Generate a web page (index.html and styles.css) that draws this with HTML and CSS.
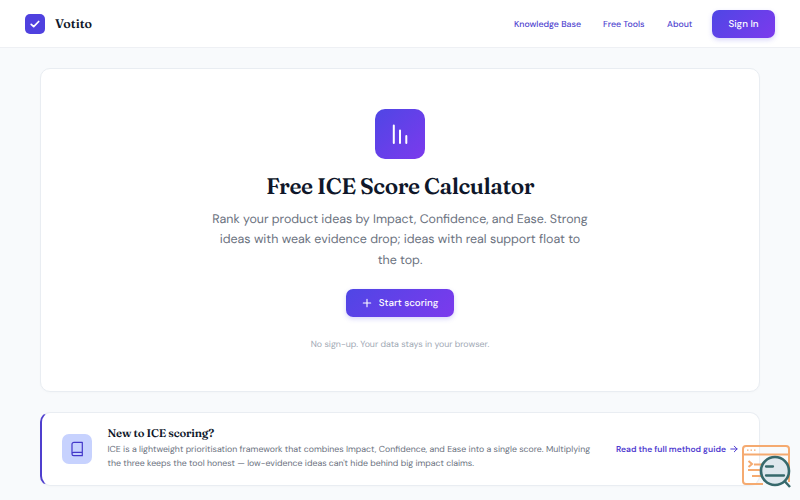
FILE: index.html
```html
<!DOCTYPE html>
<html lang="en">
<head>
<meta charset="utf-8">
<title>Free ICE Score Calculator</title>
<link rel="stylesheet" href="styles.css">
</head>
<body>
<header class="header">
  <a class="brand">
    <svg class="logo" viewBox="0 0 20 20"><rect width="20" height="20" rx="5" fill="#4f41df"/><path d="M6.200 10.300l2.500 2.400 5-5.200" fill="none" stroke="#fff" stroke-width="1.700" stroke-linecap="round" stroke-linejoin="round"/></svg>
    <span class="brand-name">Votito</span>
  </a>
  <nav class="nav">
    <a class="nav-kb">Knowledge Base</a><a class="nav-tools">Free Tools</a><a class="nav-about">About</a>
    <a class="button signin"><span>Sign In</span></a>
  </nav>
</header>
<main class="main">
  <section class="hero">
    <div class="hero-icon"><svg width="50" height="50" viewBox="0 0 50 50"><path d="M18.800 16.500v17.500M25 21.500v12.500M31.300 27v7" fill="none" stroke="#fff" stroke-width="2" stroke-linecap="round"/></svg></div>
    <h1><span>Free ICE Score Calculator</span></h1>
    <p class="lead"><span>Rank your product ideas by Impact, Confidence, and Ease. Strong</span><br><span>ideas with weak evidence drop; ideas with real support float to</span><br><span>the top.</span></p>
    <a class="button start"><svg width="10" height="10" viewBox="0 0 10 10"><path d="M5 1.300v7.400M1.300 5h7.400" stroke="#fff" stroke-width="1.100" stroke-linecap="round"/></svg><span>Start scoring</span></a>
    <p class="note"><span>No sign-up. Your data stays in your browser.</span></p>
  </section>
  <section class="guide">
    <div class="guide-icon"><svg width="30" height="30" viewBox="0 0 30 30"><path d="M10 20V10.300a2 2 0 0 1 2-2h8.300v13.400H11.700a1.700 1.700 0 0 1 0-3.400h8.600" fill="none" stroke="#4338ca" stroke-width="1.200" stroke-linecap="round" stroke-linejoin="round"/></svg></div>
    <div class="guide-text">
      <h2><span>New to ICE scoring?</span></h2>
      <p><span>ICE is a lightweight prioritisation framework that combines Impact, Confidence, and Ease into a single score. Multiplying</span><br><span>the three keeps the tool honest — low-evidence ideas can't hide behind big impact claims.</span></p>
    </div>
    <a class="guide-link"><span>Read the full method guide</span><svg width="8" height="8" viewBox="0 0 8 8"><path d="M.800 4h6.300M4.300 1.200L7.100 4 4.300 6.800" fill="none" stroke="#4f3cd0" stroke-width="1" stroke-linecap="round" stroke-linejoin="round"/></svg></a>
  </section>
</main>
<svg class="inspector" width="50" height="46" viewBox="0 0 50 46">
  <g fill="none" stroke="#f5aa70" stroke-width="2">
    <path d="M21 39H4a3 3 0 0 1-3-3V4a3 3 0 0 1 3-3h40a3 3 0 0 1 3 3v33M1 9.500h46"/>
    <path d="M5 5.200h1.500M8.500 5.200H10M12 5.200h1.500" stroke-width="1.300"/>
    <path d="M6.500 16l3.500 3-3.500 3M12 19.500h9M6 25h14M10 31h9"/>
  </g>
  <circle cx="33" cy="26" r="14" fill="#dfe8ee" stroke="#37696c" stroke-width="2.600"/>
  <path d="M24 21.500h7M24 30.500h18" stroke="#37696c" stroke-width="2.300" stroke-linecap="round"/>
  <path d="M42.500 36l5.500 6" stroke="#37696c" stroke-width="2.500"/>
</svg>
</body>
</html>
```
FILE: styles.css
```css
* { box-sizing: border-box; }
body { margin: 0; height: 500px; overflow: hidden; background: #f8fafc; font-family: "DM Sans", Inter, sans-serif; font-variation-settings: "opsz" 14; text-rendering: geometricPrecision; color: #0f172a; }
h1, h2, p { margin: 0; }
span { white-space: nowrap; }
.header { height: 48px; padding: 0 25px; display: flex; justify-content: space-between; align-items: center; background: #fff; border-bottom: 1px solid #eef0f4; }
.brand { display: flex; align-items: center; gap: 10px; }
.logo { width: 20px; height: 20px; }
.brand-name { padding-top: 2px; font: 600 12.5px/20px Fraunces, "Liberation Serif", serif; font-variation-settings: "opsz" 20; }
.nav { display: flex; align-items: center; font-size: 8.75px; font-weight: 500; color: #5044cf; }
.nav a { flex: none; white-space: nowrap; }
.nav-kb { width: 89px; }
.nav-tools { width: 64px; }
.nav-about { width: 45px; }
.button { display: flex; align-items: center; justify-content: center; color: #fff; background: linear-gradient(135deg, #4f46e5, #7c3aed); font-weight: 500; font-variation-settings: "opsz" 16; box-shadow: 0 2px 5px rgba(79, 70, 229, .22); }
.button span { padding-top: 1px; }
.signin { width: 63px; height: 28px; border-radius: 7px; font-size: 9.8px; }
.main { width: 720px; margin: 20px auto 0; }
.hero { height: 324px; padding-top: 40px; border: 1px solid #e9edf2; border-radius: 10px; background: #fff; display: flex; flex-direction: column; align-items: center; box-shadow: 0 1px 3px rgba(15, 23, 42, .02); }
.hero-icon { width: 50px; height: 50px; border-radius: 10px; background: linear-gradient(135deg, #4f46e5, #7c3aed); }
h1 { margin-top: 12px; font: 600 22.5px/30px Fraunces, "Liberation Serif", serif; font-variation-settings: "opsz" 36; letter-spacing: -.021em; }
.lead { margin-top: 8px; text-align: center; font-size: 12.45px; font-variation-settings: "opsz" 20; line-height: 20.3px; color: #6b7280; }
.start { width: 108px; height: 28px; margin-top: 19px; gap: 7px; border-radius: 7px; font-size: 9.8px; }
.note { margin-top: 20px; font-size: 8.8px; line-height: 14px; color: #a0a8b4; }
.guide { margin-top: 20px; height: 74px; padding: 0 21px 0 20px; border: 1px solid #e9edf2; border-left: 2px solid #4f3fce; border-radius: 10px; background: #fff; display: flex; align-items: center; box-shadow: 0 1px 3px rgba(15, 23, 42, .02); }
.guide-icon { width: 30px; height: 30px; margin-right: 15.5px; border-radius: 7px; background: #c7d2fe; flex: none; }
.guide-text { flex: 1; min-width: 0; }
h2 { margin-top: -2px; padding-bottom: 2px; font: 600 11.25px/16px Fraunces, "Liberation Serif", serif; font-variation-settings: "opsz" 18; letter-spacing: -.015em; }
.guide-text p { font-size: 8.75px; line-height: 13.7px; color: #6b7280; }
.guide-link { display: flex; align-items: center; gap: 4px; font-size: 8.5px; font-weight: 600; color: #4f3cd0; }
.inspector { position: absolute; left: 742px; top: 445px; }
```
